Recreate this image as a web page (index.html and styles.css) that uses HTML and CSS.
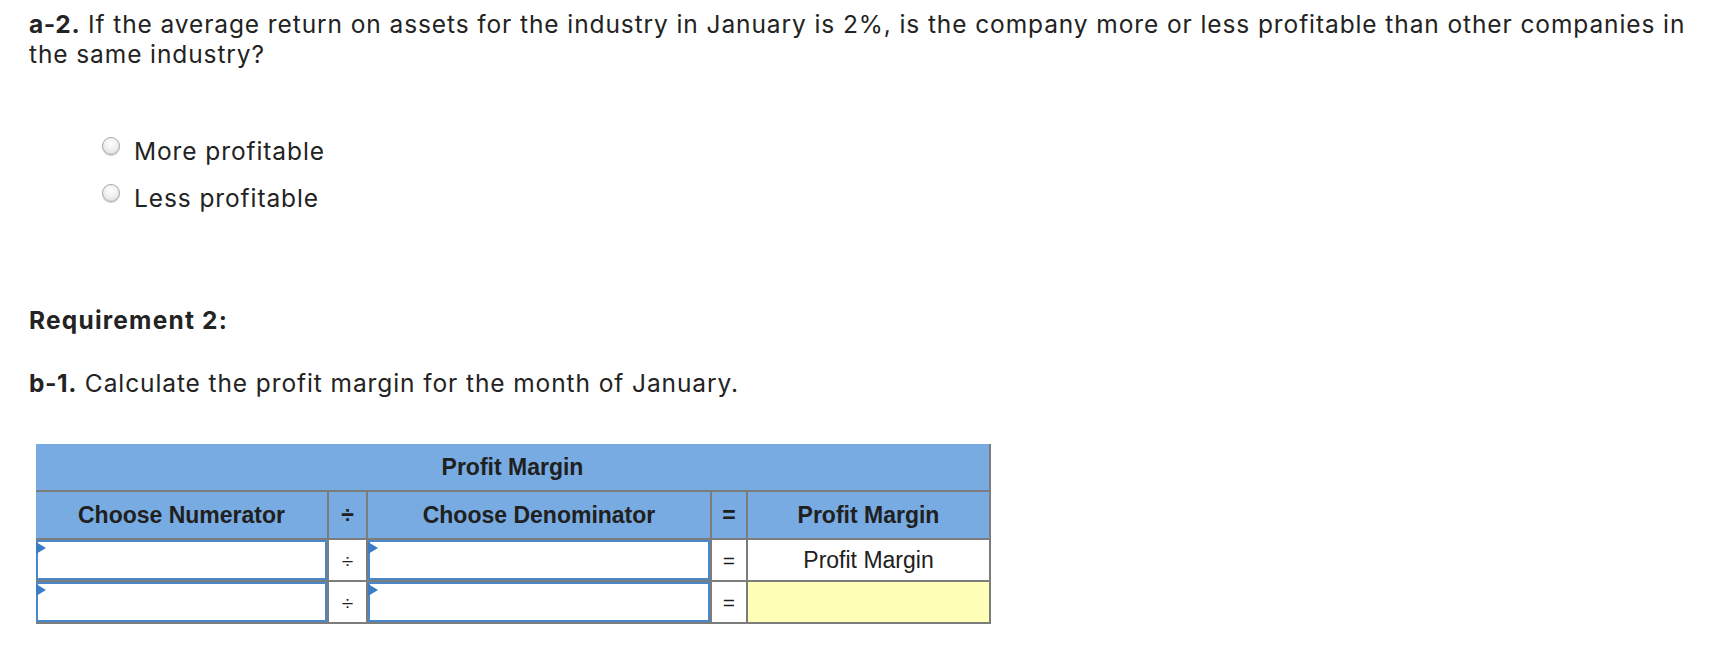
FILE: index.html
```html
<!DOCTYPE html>
<html lang="en">
<head>
<meta charset="utf-8">
<title>Requirement</title>
<link rel="stylesheet" href="styles.css">
</head>
<body>
<div class="page">
  <p class="question"><b>a-2.</b> If the average return on assets for the industry in January is 2%, is the company more or less profitable than other companies in the same industry?</p>
  <div class="options">
    <label class="option"><span class="radio"></span><span class="opt-text">More profitable</span></label>
    <label class="option"><span class="radio"></span><span class="opt-text">Less profitable</span></label>
  </div>
  <h2 class="req">Requirement 2:</h2>
  <p class="question q-b"><b>b-1.</b> Calculate the profit margin for the month of January.</p>
  <div class="calc">
    <div class="cell head title">Profit Margin</div>
    <div class="cell head">Choose Numerator</div>
    <div class="cell head op">÷</div>
    <div class="cell head">Choose Denominator</div>
    <div class="cell head op">=</div>
    <div class="cell head">Profit Margin</div>

    <div class="cell body"><div class="input"><span class="flag"></span></div></div>
    <div class="cell body op-sm">÷</div>
    <div class="cell body"><div class="input"><span class="flag"></span></div></div>
    <div class="cell body op-sm">=</div>
    <div class="cell body label">Profit Margin</div>

    <div class="cell body"><div class="input"><span class="flag"></span></div></div>
    <div class="cell body op-sm">÷</div>
    <div class="cell body"><div class="input"><span class="flag"></span></div></div>
    <div class="cell body op-sm">=</div>
    <div class="cell body result"></div>
  </div>
</div>
</body>
</html>
```
FILE: styles.css
```css
html, body {
  margin: 0;
  padding: 0;
  background: #ffffff;
}

.page {
  padding: 9px 0 40px 29px;
  font-family: "Inter", "Liberation Sans", sans-serif;
  font-size: 24.5px;
  letter-spacing: 0.9px;
  line-height: 30px;
  color: #232323;
}

.question {
  margin: 0;
}

.question b {
  font-weight: 700;
  letter-spacing: 0.6px;
}

.options {
  margin-top: 67px;
  padding-left: 73px;
  display: flex;
  flex-direction: column;
  gap: 17px;
}

.option {
  display: flex;
  align-items: flex-start;
  gap: 14px;
}

.radio {
  flex: none;
  width: 16px;
  height: 16px;
  margin-top: 1px;
  border: 1px solid #a9a9a9;
  border-radius: 50%;
  background: radial-gradient(circle at 50% 35%, #ffffff 0%, #f1f1f1 45%, #d6d6d6 100%);
  box-shadow: 0 1px 1px rgba(0, 0, 0, 0.18);
}

.req {
  margin: 92px 0 0 0;
  font-size: 24.5px;
  font-weight: 700;
  letter-spacing: 1.2px;
  line-height: 30px;
}

.q-b {
  margin-top: 33px;
}

.calc {
  margin: 46px 0 0 7px;
  width: 955px;
  box-sizing: border-box;
  display: grid;
  grid-template-columns: 291px 37px 342px 34px 241px;
  grid-template-rows: 46px 46px 40px 40px;
  gap: 2px;
  padding: 0 2px 2px 0;
  background: #7c7c7c;
  font-family: "Liberation Sans", Arial, sans-serif;
  font-size: 23px;
  letter-spacing: 0;
  color: #202020;
}

.cell {
  display: flex;
  align-items: center;
  justify-content: center;
  line-height: 1;
}

.head {
  background: #77abe1;
  font-weight: 700;
}

.title {
  grid-column: 1 / -1;
}

.body {
  background: #ffffff;
}

.op-sm {
  font-size: 21px;
}

.label {
  font-weight: 400;
}

.result {
  background: #ffffb8;
}

.body:has(.input) {
  align-items: stretch;
  justify-content: stretch;
}

.input {
  position: relative;
  flex: 1;
  border: 2px solid #4a87c9;
  background: #ffffff;
}

.flag {
  position: absolute;
  left: -2px;
  top: 0;
  width: 0;
  height: 0;
  border-left: 10px solid #3b7cc4;
  border-top: 6px solid transparent;
  border-bottom: 6px solid transparent;
}
```
